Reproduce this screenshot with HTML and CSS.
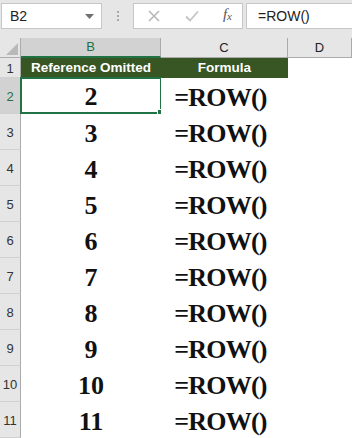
FILE: index.html
```html
<!DOCTYPE html>
<html lang="en">
<head>
  <meta charset="UTF-8">
  <title>ROW - Reference Omitted</title>
  <link rel="stylesheet" href="styles.css">
</head>
<body>
  <div class="toolbar">
    <div class="name-box">
      <span>B2</span>
      <svg class="drop" width="9" height="5" viewBox="0 0 9 5"><path d="M0 0h9L4.5 5z" fill="#707070"/></svg>
    </div>
    <div class="grip"><i></i><i></i><i></i></div>
    <div class="fx-buttons">
      <svg width="14" height="14" viewBox="0 0 14 14"><path d="M2 2l10 10M12 2L2 12" stroke="#b8b8b8" stroke-width="1.6"/></svg>
      <svg width="16" height="14" viewBox="0 0 16 14"><path d="M2 7.5l4 4L14 2.5" stroke="#c4c4c4" stroke-width="1.8" fill="none"/></svg>
      <span class="fx">f<sub>x</sub></span>
    </div>
    <div class="formula-box">=ROW()</div>
  </div>

  <div class="sheet">
    <div class="corner"><svg width="12" height="12" viewBox="0 0 12 12"><path d="M12 0v12H0z" fill="#b9b9b9"/></svg></div>
    <div class="col-head selected">B</div>
    <div class="col-head">C</div>
    <div class="col-head">D</div>

    <div class="row-head">1</div>
    <div class="title">Reference Omitted</div>
    <div class="title">Formula</div>
    <div class="cell"></div>

    <div class="row-head selected">2</div>
    <div class="cell num active">2<span class="handle"></span></div>
    <div class="cell formula">=ROW()</div>
    <div class="cell"></div>

    <div class="row-head">3</div>
    <div class="cell num">3</div>
    <div class="cell formula">=ROW()</div>
    <div class="cell"></div>

    <div class="row-head">4</div>
    <div class="cell num">4</div>
    <div class="cell formula">=ROW()</div>
    <div class="cell"></div>

    <div class="row-head">5</div>
    <div class="cell num">5</div>
    <div class="cell formula">=ROW()</div>
    <div class="cell"></div>

    <div class="row-head">6</div>
    <div class="cell num">6</div>
    <div class="cell formula">=ROW()</div>
    <div class="cell"></div>

    <div class="row-head">7</div>
    <div class="cell num">7</div>
    <div class="cell formula">=ROW()</div>
    <div class="cell"></div>

    <div class="row-head">8</div>
    <div class="cell num">8</div>
    <div class="cell formula">=ROW()</div>
    <div class="cell"></div>

    <div class="row-head">9</div>
    <div class="cell num">9</div>
    <div class="cell formula">=ROW()</div>
    <div class="cell"></div>

    <div class="row-head">10</div>
    <div class="cell num">10</div>
    <div class="cell formula">=ROW()</div>
    <div class="cell"></div>

    <div class="row-head">11</div>
    <div class="cell num">11</div>
    <div class="cell formula">=ROW()</div>
    <div class="cell"></div>
  </div>
</body>
</html>
```

FILE: styles.css
```css
:root {
  --chrome: #e6e6e6;
  --head-border: #ababab;
  --row-line: #d0d0d0;
  --green: #217346;
  --title-green: #375623;
}

body {
  margin: 0;
  width: 352px;
  height: 438px;
  overflow: hidden;
  background: #fff;
  font-family: "Liberation Sans", Arial, sans-serif;
}

.toolbar {
  height: 38px;
  background: var(--chrome);
  display: flex;
  align-items: flex-start;
  padding-top: 3px;
  box-sizing: border-box;
}

.name-box {
  margin-left: 1px;
  width: 101px;
  height: 26px;
  box-sizing: border-box;
  background: #fff;
  border: 1px solid #c6c6c6;
  display: flex;
  align-items: center;
  justify-content: space-between;
  padding: 0 7px 0 8px;
  font-size: 14px;
  color: #222;
}

.grip {
  width: 31px;
  height: 26px;
  display: flex;
  flex-direction: column;
  align-items: center;
  justify-content: center;
  gap: 2px;
}

.grip i {
  width: 2px;
  height: 2px;
  background: #a8a8a8;
}

.fx-buttons {
  width: 110px;
  height: 26px;
  box-sizing: border-box;
  background: #fff;
  border: 1px solid #c6c6c6;
  display: flex;
  align-items: center;
  justify-content: space-between;
  padding: 0 10px 0 13px;
}

.fx {
  font-family: "Liberation Serif", serif;
  font-style: italic;
  font-size: 15px;
  color: #555;
  margin-top: -3px;
}

.fx sub {
  font-size: 11px;
  vertical-align: -1px;
}

.formula-box {
  margin-left: 3px;
  flex: 1;
  height: 26px;
  box-sizing: border-box;
  background: #fff;
  border: 1px solid #c6c6c6;
  border-right: none;
  padding-left: 11px;
  font-size: 14px;
  line-height: 24px;
  color: #222;
}

.sheet {
  display: grid;
  grid-template-columns: 21px 140px 127px 64px;
  grid-template-rows: 20px 20px repeat(10, 36px);
}

.corner {
  background: var(--chrome);
  border-right: 1px solid var(--head-border);
  border-bottom: 1px solid var(--head-border);
  display: flex;
  align-items: flex-end;
  justify-content: flex-end;
  padding: 0 2px 2px 0;
}

.col-head {
  background: var(--chrome);
  border-right: 1px solid var(--head-border);
  border-bottom: 1px solid var(--head-border);
  font-size: 13px;
  line-height: 19px;
  text-align: center;
  color: #222;
}

.col-head.selected {
  background: #d2d2d2;
  color: var(--green);
  border-bottom: 2px solid var(--green);
  line-height: 18px;
}

.row-head {
  background: var(--chrome);
  border-right: 1px solid var(--head-border);
  border-bottom: 1px solid var(--row-line);
  font-size: 13px;
  color: #333;
  display: flex;
  align-items: center;
  justify-content: center;
  padding-top: 2px;
}

.row-head.selected {
  background: #d2d2d2;
  color: var(--green);
}

.title {
  background: var(--title-green);
  color: #fff;
  font-weight: bold;
  font-size: 13.5px;
  line-height: 20px;
  text-align: center;
}

.cell {
  background: #fff;
  font-family: "Liberation Serif", "Times New Roman", serif;
  font-weight: bold;
  font-size: 26px;
  color: #111;
  display: flex;
  align-items: center;
  justify-content: center;
  position: relative;
  padding-top: 4px;
}

.cell.formula {
  padding-right: 8px;
  letter-spacing: -0.8px;
}

.cell.active {
  border: 2px solid var(--green);
  margin: -1px -1px 0 -1px;
  padding-top: 2px;
}

.handle {
  position: absolute;
  right: -4px;
  bottom: -4px;
  width: 5px;
  height: 5px;
  background: var(--green);
  border: 1px solid #fff;
}
```
